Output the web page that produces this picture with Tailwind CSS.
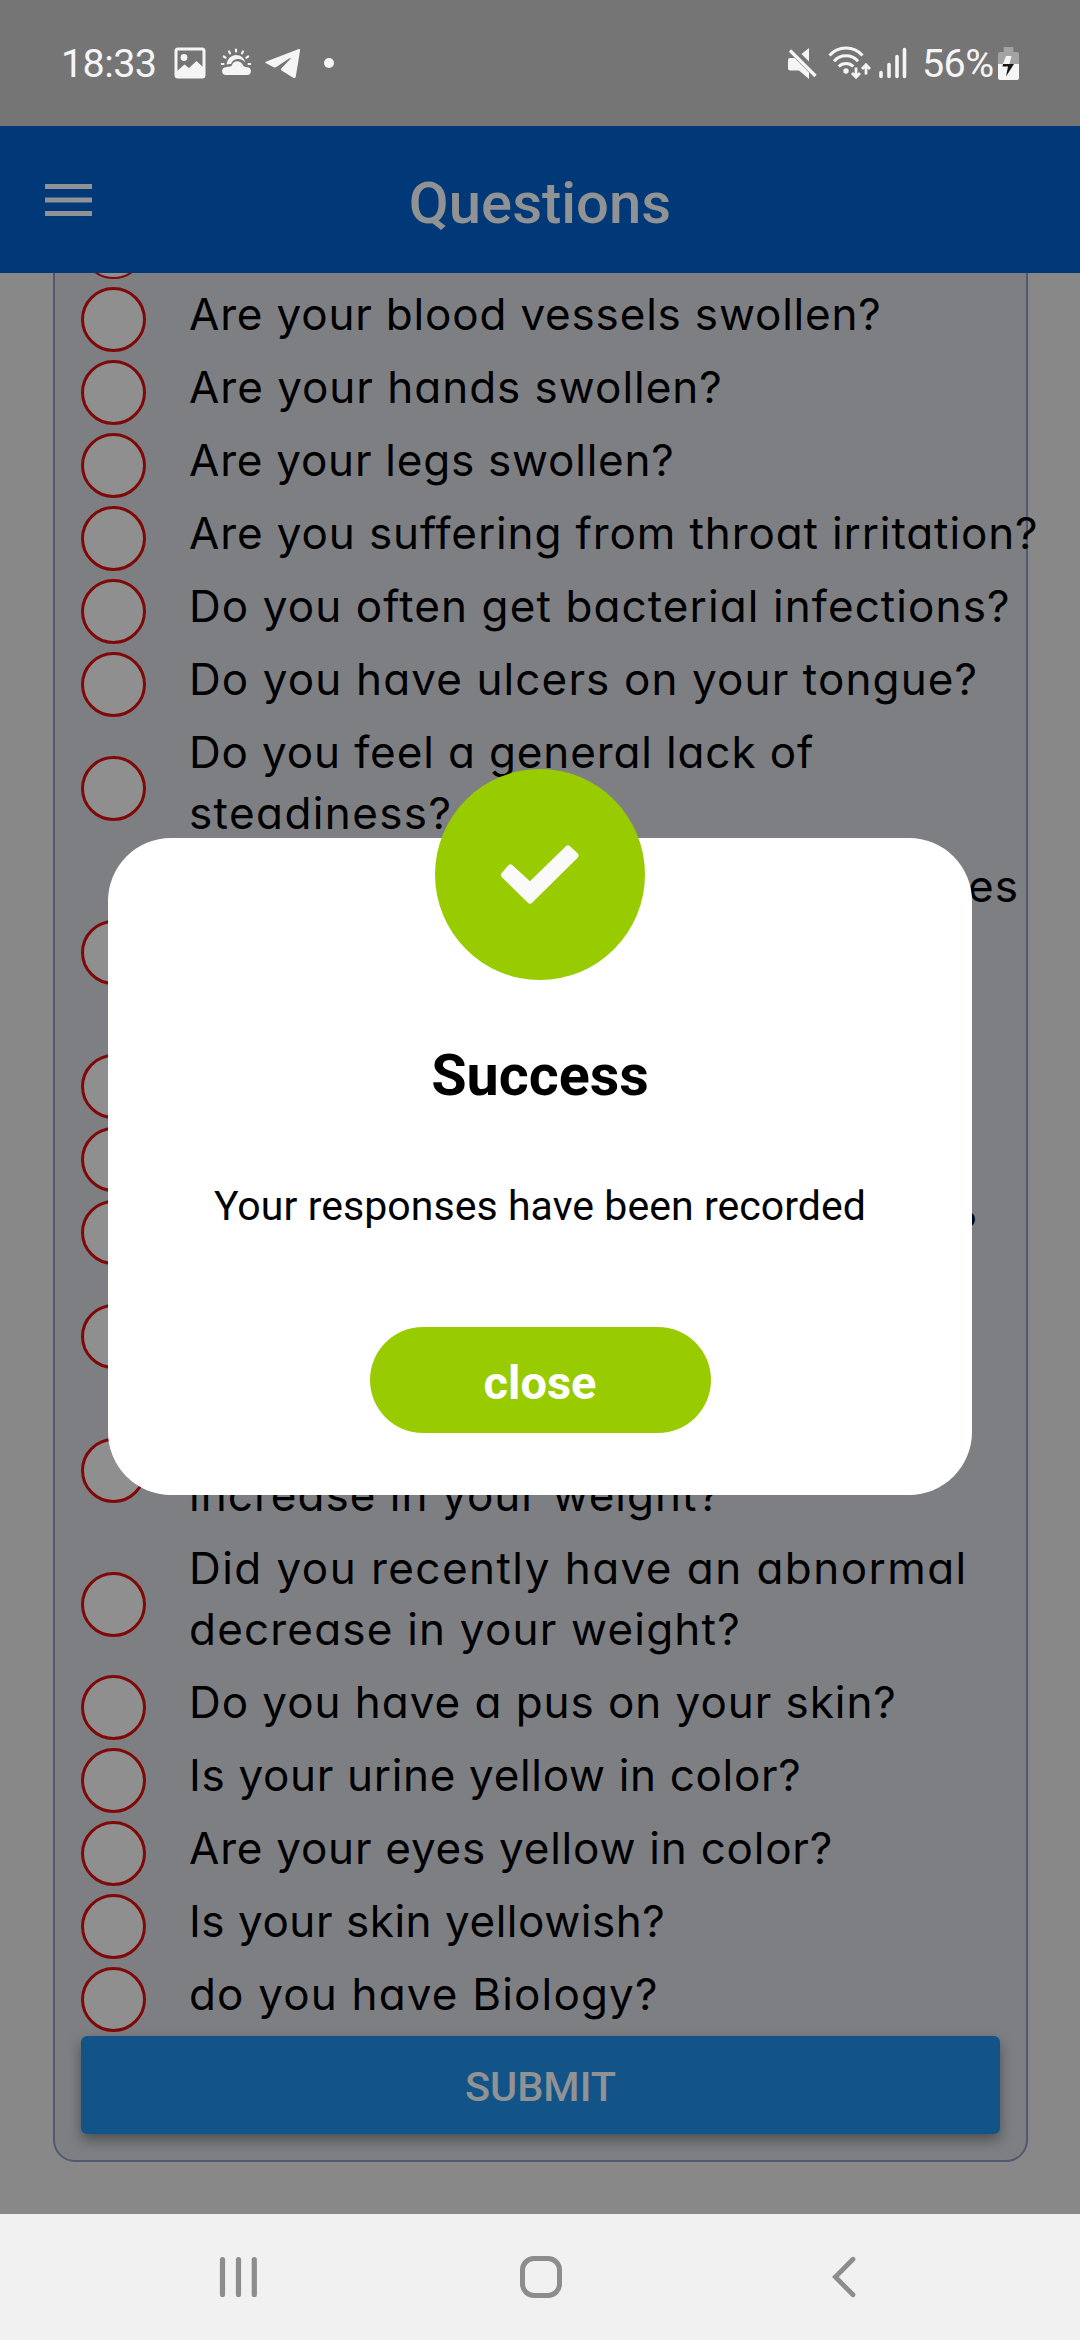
<!DOCTYPE html>
<html lang="en">
<head>
<meta charset="utf-8">
<title>Questions</title>
<script src="https://cdn.jsdelivr.net/npm/@tailwindcss/browser@4"></script>
</head>
<body class="relative flex h-[2340px] w-[1080px] flex-col overflow-hidden bg-[#888888] font-['Roboto',sans-serif]">

  <!-- status bar -->
  <div class="flex h-[126px] shrink-0 items-center justify-between bg-[#757575] pr-[61px] pl-[61px] text-[39.5px] text-[#f5f5f5]">
    <div class="flex items-center">
      <span class="w-[113px] pt-px tracking-[-0.6px]">18:33</span>
      <svg class="h-8 w-8" viewBox="0 0 32 32"><rect x="2" y="2" width="28" height="28" rx="2" fill="none" stroke="#f5f5f5" stroke-width="3"/><circle cx="10" cy="10.500" r="3.400" fill="#f5f5f5"/><path d="M2 25 10.500 17.500 15 21 22.500 14 30 21V30H2Z" fill="#f5f5f5"/></svg>
      <svg class="ml-[14px] h-8 w-8" viewBox="0 0 32 32"><g stroke="#f5f5f5" stroke-width="2.200" stroke-linecap="round"><path d="M16 2.500V4.500M9 4.500 10 6.300M23 4.500 22 6.300M3.800 9.500 5.500 10.600M28.200 9.500 26.500 10.600M1.800 17H3.500M28.500 17H30.200"/></g><path d="M6.500 17.500C7.500 11.500 11.500 8 16 8C20.500 8 24.500 11 25.300 15.500C23.500 13 20.500 11.700 17.500 12C14 12.300 12 14.300 11 17C9.500 16.800 8 17 6.500 17.500Z" fill="#f5f5f5"/><path d="M6 28A3.900 3.900 0 0 1 6 20.200C7.500 19.500 9.500 19.800 11.500 19C12.500 15.500 14.800 14.200 17.500 14.200C20.500 14.200 22.500 16.500 23.300 19C24.500 19.900 25.500 20 27 20.200A3.900 3.900 0 0 1 27 28Z" fill="#f5f5f5"/></svg>
      <svg class="ml-[13px] h-8 w-9" viewBox="0 0 36 32"><path d="M1 16.300C0 16 .2 15 1.300 14.500L33.200 2.200C34.600 1.700 35.200 2.400 35 3.800L30.800 29.500C30.500 31.200 29.500 31.500 28.200 30.700L16.500 23.600C15.600 23 15.600 22.300 16.300 21.500L25.500 11.700C26 11 25.300 10.600 24.600 11.200L11.300 20C10.300 20.600 9.300 20.500 8.200 20Z" fill="#f5f5f5"/></svg>
      <span class="ml-[23px] h-2.5 w-2.5 rounded-full bg-[#f5f5f5]"></span>
    </div>
    <div class="flex items-center">
      <svg class="h-8 w-[30px]" viewBox="0 0 30 32"><path d="M3 11H7.500L22 25.500V32L12 23.500H3Q1 23.500 1 21.500V13Q1 11 3 11ZM22 1V14.500L14.500 7Z" fill="#f5f5f5"/><path d="M3 3.500 28.500 29" stroke="#f5f5f5" stroke-width="3.200"/></svg>
      <svg class="ml-[11px] h-[34px] w-[43px]" viewBox="0 0 43 34"><g fill="none" stroke="#f5f5f5" stroke-width="3.100"><path d="M1.500 9.500A22 22 0 0 1 34.500 9.500M6 15.200A16 16 0 0 1 30 15.200M10.700 20.500A10.500 10.500 0 0 1 25.300 20.500"/><path d="M28 21.500V31M24 27 28 31.200 32 27M38 28.500V19M34 23 38 18.800 42 23" stroke-width="2.800"/></g><circle cx="18" cy="25" r="2.700" fill="#f5f5f5"/></svg>
      <svg class="ml-[8px] h-8 w-7" viewBox="0 0 28 32"><path d="M2 25.500V29.500M10 17.500V29.500M18 9.500V29.500M25.500 2.500V29.500" stroke="#f5f5f5" stroke-width="3.600" stroke-linecap="round"/></svg>
      <span class="ml-[15px] w-[76px] pt-px text-[39.5px] tracking-[-0.6px] whitespace-nowrap">56%</span>
      <svg class="h-[33px] w-[21px]" viewBox="0 0 21 33"><path d="M5.700 0H15.300V5H19Q21 5 21 7V17H0V7Q0 5 2 5H5.700Z" fill="#a3a3a3"/><path d="M0 17H21V31Q21 33 19 33H2Q0 33 0 31Z" fill="#f5f5f5"/><path d="M8 9H13.500L11.500 17H5Z" fill="#f5f5f5"/><path d="M5 17H16L8 29.500 10 19.500H4.500Z" fill="#161616"/></svg>
    </div>
  </div>

  <!-- app bar -->
  <header class="grid h-[147px] shrink-0 grid-cols-[1fr_auto_1fr] items-center bg-[#003878] px-[45px]">
    <svg class="h-8 w-[47px]" viewBox="0 0 47 32"><path d="M0 2.500H47M0 16H47M0 29.500H47" stroke="#909294" stroke-width="5"/></svg>
    <h1 class="pt-[6px] text-[58px] leading-[68px] font-medium text-[#909294]">Questions</h1>
  </header>

  <!-- scrolled form -->
  <main class="flex min-h-0 w-[1081px] flex-1 flex-col justify-end overflow-hidden px-[53px] pb-[52px]">
    <form class="flex w-[975px] shrink-0 flex-col rounded-b-[22px] border-2 border-[#50596f] bg-[#7e7f83] px-[26px] pb-[26px] font-['Inter',sans-serif] text-[44px] leading-[61px] whitespace-nowrap text-black [font-feature-settings:'cv11']">
      <div class="flex h-[73px] items-center"><i class="h-[65.5px] w-[65px] rounded-full border-[2.5px] border-[#7f0808] bg-[#8f8f8f]"></i></div>
      <label class="flex items-center gap-[43px]"><i class="h-[65.5px] w-[65px] shrink-0 rounded-full border-3 border-[#7f0808] bg-[#8f8f8f]"></i><span class="pt-px pb-[11px] tracking-[0.82px]">Are your blood vessels swollen?</span></label>
      <label class="flex items-center gap-[43px]"><i class="h-[65.5px] w-[65px] shrink-0 rounded-full border-3 border-[#7f0808] bg-[#8f8f8f]"></i><span class="pt-px pb-[11px] tracking-[0.98px]">Are your hands swollen?</span></label>
      <label class="flex items-center gap-[43px]"><i class="h-[65.5px] w-[65px] shrink-0 rounded-full border-3 border-[#7f0808] bg-[#8f8f8f]"></i><span class="pt-px pb-[11px] tracking-[0.77px]">Are your legs swollen?</span></label>
      <label class="flex items-center gap-[43px]"><i class="h-[65.5px] w-[65px] shrink-0 rounded-full border-3 border-[#7f0808] bg-[#8f8f8f]"></i><span class="pt-px pb-[11px] tracking-[0.89px]">Are you suffering from throat irritation?</span></label>
      <label class="flex items-center gap-[43px]"><i class="h-[65.5px] w-[65px] shrink-0 rounded-full border-3 border-[#7f0808] bg-[#8f8f8f]"></i><span class="pt-px pb-[11px] tracking-[1.1px]">Do you often get bacterial infections?</span></label>
      <label class="flex items-center gap-[43px]"><i class="h-[65.5px] w-[65px] shrink-0 rounded-full border-3 border-[#7f0808] bg-[#8f8f8f]"></i><span class="pt-px pb-[11px] tracking-[1.12px]">Do you have ulcers on your tongue?</span></label>
      <label class="flex items-center gap-[43px]"><i class="h-[65px] w-[65px] shrink-0 rounded-full border-3 border-[#7f0808] bg-[#8f8f8f]"></i><span class="flex flex-col pt-px pb-[11px]"><span class="tracking-[0.87px]">Do you feel a general lack of</span><span class="tracking-[1.4px]">steadiness?</span></span></label>
      <label class="flex h-[195px] items-center justify-between"><i class="h-[65px] w-[65px] shrink-0 rounded-full border-3 border-[#7f0808] bg-[#8f8f8f]"></i><span class="-mr-[19px] self-start pt-px tracking-[1px]">es</span></label>
      <div class="flex h-[73px] items-center"><i class="h-[65px] w-[65px] rounded-full border-3 border-[#7f0808] bg-[#8f8f8f]"></i></div>
      <div class="flex h-[73px] items-center"><i class="h-[65px] w-[65px] rounded-full border-3 border-[#7f0808] bg-[#8f8f8f]"></i></div>
      <label class="flex h-[73px] items-center justify-between"><i class="h-[65px] w-[65px] rounded-full border-3 border-[#7f0808] bg-[#8f8f8f]"></i><span class="mr-[23px] pt-px pb-[11px]">?</span></label>
      <div class="flex h-[134px] items-center"><i class="h-[65px] w-[65px] rounded-full border-3 border-[#7f0808] bg-[#8f8f8f]"></i></div>
      <label class="flex h-[134px] items-center gap-[43px]"><i class="h-[65px] w-[65px] shrink-0 rounded-full border-3 border-[#7f0808] bg-[#8f8f8f]"></i><span class="self-end pt-px pb-[11px] tracking-[1.04px]">increase in your weight?</span></label>
      <label class="flex items-center gap-[43px]"><i class="h-[65px] w-[65px] shrink-0 rounded-full border-3 border-[#7f0808] bg-[#8f8f8f]"></i><span class="flex flex-col pt-px pb-[11px]"><span class="tracking-[1.45px]">Did you recently have an abnormal</span><span class="tracking-[1.2px]">decrease in your weight?</span></span></label>
      <label class="flex items-center gap-[43px]"><i class="h-[65.5px] w-[65px] shrink-0 rounded-full border-3 border-[#7f0808] bg-[#8f8f8f]"></i><span class="pt-px pb-[11px] tracking-[0.95px]">Do you have a pus on your skin?</span></label>
      <label class="flex items-center gap-[43px]"><i class="h-[65.5px] w-[65px] shrink-0 rounded-full border-3 border-[#7f0808] bg-[#8f8f8f]"></i><span class="pt-px pb-[11px] tracking-[0.68px]">Is your urine yellow in color?</span></label>
      <label class="flex items-center gap-[43px]"><i class="h-[65.5px] w-[65px] shrink-0 rounded-full border-3 border-[#7f0808] bg-[#8f8f8f]"></i><span class="pt-px pb-[11px] tracking-[0.77px]">Are your eyes yellow in color?</span></label>
      <label class="flex items-center gap-[43px]"><i class="h-[65.5px] w-[65px] shrink-0 rounded-full border-3 border-[#7f0808] bg-[#8f8f8f]"></i><span class="pt-px pb-[11px] tracking-[0.54px]">Is your skin yellowish?</span></label>
      <label class="flex items-center gap-[43px]"><i class="h-[65.5px] w-[65px] shrink-0 rounded-full border-3 border-[#7f0808] bg-[#8f8f8f]"></i><span class="pt-px pb-[11px] tracking-[1.17px]">do you have Biology?</span></label>
      <button type="button" class="h-[98px] w-full rounded-md bg-[#125488] pt-1 font-['Roboto',sans-serif] text-[41.5px] leading-[50px] font-medium text-[#909294] shadow-[0_6px_14px_rgba(0,0,0,0.38)]">SUBMIT</button>
    </form>
  </main>

  <!-- system navigation -->
  <nav class="grid h-[126px] shrink-0 grid-cols-3 items-center bg-[#f1f1f1] px-[87px]">
    <svg class="h-[42px] w-[38px] justify-self-center" viewBox="0 0 38 42"><path d="M3.500 3.500V38.500M19.500 3.500V38.500M35.300 3.500V38.500" stroke="#8d8d8d" stroke-width="5.200" stroke-linecap="round"/></svg>
    <svg class="ml-px h-[42px] w-[42px] justify-self-center" viewBox="0 0 42 42"><rect x="2.500" y="2.500" width="37" height="37" rx="11.500" fill="none" stroke="#8d8d8d" stroke-width="5"/></svg>
    <svg class="ml-[3px] h-[42px] w-6 justify-self-center" viewBox="0 0 24 42"><path d="M21 3.300 3.300 21 21 38.700" fill="none" stroke="#8d8d8d" stroke-width="4.800" stroke-linecap="round"/></svg>
  </nav>

  <!-- success dialog -->
  <div role="dialog" class="absolute top-[838px] left-[108px] flex h-[657px] w-[864px] flex-col items-center rounded-[63px] bg-white pt-[208px] text-black">
    <svg class="absolute -top-[69px] left-[327px] h-[211px] w-[210px]" viewBox="0 0 210 211"><ellipse cx="105" cy="105.500" rx="105" ry="105.500" fill="#99cc00"/><path d="M69 106 75.500 98.500 95 116.500 133 79.500 140.500 86.500 95 131.500Z" fill="#fafafa" stroke="#fafafa" stroke-width="6" stroke-linejoin="round"/></svg>
    <h2 class="text-[57.500px] leading-[60px] font-bold">Success</h2>
    <p class="mt-[76px] text-[41px] leading-[48px] tracking-[0.06px]">Your responses have been recorded</p>
    <button type="button" class="mt-[97px] h-[106px] w-[341px] rounded-full bg-[#99cc00] pt-[6px] text-[47px] leading-[56px] font-bold text-white">close</button>
  </div>
</body>
</html>
